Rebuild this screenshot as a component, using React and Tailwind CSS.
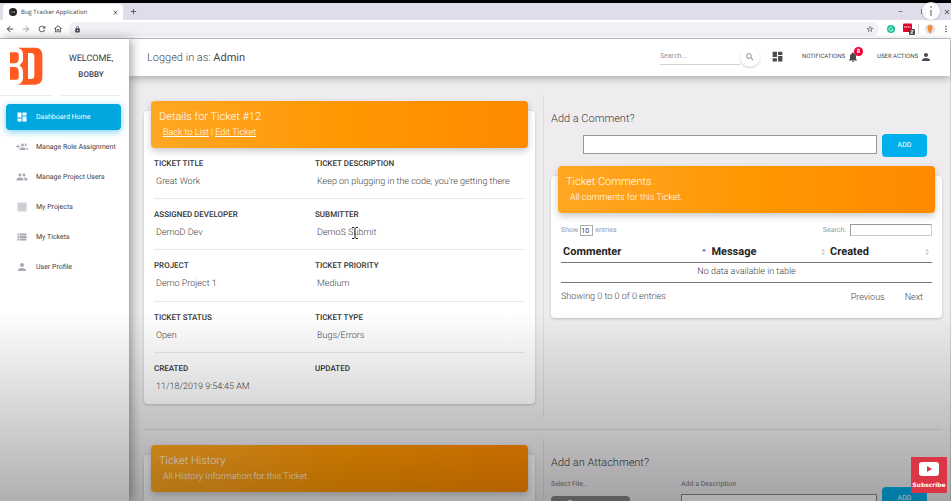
import React from "react";
import {
  MdDashboard, MdGroup, MdPerson, MdViewList, MdSearch, MdNotifications,
  MdArrowBack, MdArrowForward, MdRefresh, MdOutlineHome, MdLock, MdClose, MdAdd, MdStarBorder,
  MdMoreVert, MdRemove, MdCropSquare,
} from "react-icons/md";

function GroupAddIcon({ className }) {
  return (
    <svg viewBox="0 0 24 24" className={className} fill="currentColor" aria-hidden="true">
      <path d="M8 10H5V7H3v3H0v2h3v3h2v-3h3v-2zm10 1c1.66 0 2.99-1.34 2.99-3S19.66 5 18 5c-.32 0-.63.05-.91.14.57.81.9 1.79.9 2.86s-.34 2.04-.9 2.86c.28.09.59.14.91.14zm-5 0c1.66 0 2.99-1.34 2.99-3S14.66 5 13 5s-3 1.34-3 3 1.34 3 3 3zm6.620 2.160c.83.73 1.38 1.66 1.38 2.840v2h3v-2c0-1.54-2.37-2.49-4.38-2.84zM13 13c-2 0-6 1-6 3v2h12v-2c0-2-4-3-6-3z" />
    </svg>
  );
}

function ProjectsIcon({ className }) {
  return (
    <svg viewBox="0 0 24 24" className={className} aria-hidden="true">
      <path fill="#d3d1d9" d="M3 3h18v18H3z" />
      <path stroke="#c3c1cb" strokeWidth="1" d="M3 6h18M3 10h18M3 14h18M3 18h18" />
    </svg>
  );
}

const NAV = [
  { label: "Dashboard Home", Icon: MdDashboard, active: true },
  { label: "Manage Role Assignment", Icon: GroupAddIcon },
  { label: "Manage Project Users", Icon: MdGroup },
  { label: "My Projects", Icon: ProjectsIcon },
  { label: "My Tickets", Icon: MdViewList },
  { label: "User Profile", Icon: MdPerson },
];

const DETAILS = [
  ["Ticket Title", "Great Work", "Ticket Description", "Keep on plugging in the code, you're getting there"],
  ["Assigned Developer", "DemoD Dev", "Submitter", "DemoS Submit"],
  ["Project", "Demo Project 1", "Ticket Priority", "Medium"],
  ["Ticket Status", "Open", "Ticket Type", "Bugs/Errors"],
  ["Created", "11/18/2019 9:54:45 AM", "Updated", ""],
];

function BrowserChrome() {
  return (
    <div className="shrink-0 border-t-[3px] border-black font-['Open_Sans',sans-serif]">
      <div className="flex h-[17px] items-end bg-[#dfdde9] pl-[3px] text-[#3c4043]">
        <div className="flex h-4 w-[120px] items-center rounded-t bg-white pl-1.5 pr-1">
          <svg viewBox="0 0 16 16" className="size-2 shrink-0" aria-hidden="true">
            <circle cx="8" cy="8" r="8" fill="#222" />
            <path d="M4 6v4h2M8 10V6l3 4V6" stroke="#aaa" fill="none" />
          </svg>
          <span className="ml-1 flex-1 whitespace-nowrap text-[6px]">Bug Tracker Application</span>
          <button aria-label="Close tab"><MdClose className="size-[7px]" /></button>
        </div>
        <button aria-label="New tab" className="ml-1.5 self-center"><MdAdd className="size-[9px]" /></button>
        <div className="ml-auto flex items-center gap-4 self-center">
          <button aria-label="Minimize"><MdRemove className="size-[7px]" /></button>
          <button aria-label="Maximize"><MdCropSquare className="size-[7px]" /></button>
          <button aria-label="Close window"><MdClose className="size-2" /></button>
        </div>
      </div>
      <div className="flex h-[19px] items-center border-b border-[#c9c8ce] bg-white pl-[5px] text-[#4d4f54]">
        <div className="flex gap-1.5">
          <button aria-label="Back"><MdArrowBack className="size-2.5" /></button>
          <button aria-label="Forward"><MdArrowForward className="size-2.5 text-[#aaa]" /></button>
          <button aria-label="Reload"><MdRefresh className="size-2.5" /></button>
          <button aria-label="Home"><MdOutlineHome className="size-2.5" /></button>
        </div>
        <div className="ml-1.5 flex h-[14px] flex-1 items-center rounded-full bg-[#f1f0f6] px-[5px]">
          <MdLock className="size-[7px]" />
          <input aria-label="Address" className="min-w-0 flex-1 text-[6px] outline-none" />
          <MdStarBorder className="size-2" />
        </div>
        <div className="ml-2 flex items-center">
          <svg viewBox="0 0 16 16" className="size-2" aria-hidden="true">
            <circle cx="8" cy="8" r="8" fill="#15c39a" />
            <path d="M11 5.500A4 4 0 1 0 12 9H9" stroke="#fff" strokeWidth="1.500" fill="none" />
          </svg>
          <svg viewBox="0 0 24 24" className="ml-2 h-3 w-3" aria-hidden="true">
            <rect width="18" height="17" y="1" rx="2" fill="#e4002b" />
            <path d="M2 8h13" stroke="#fff" strokeWidth="2" strokeDasharray="3 1" />
            <rect x="12" y="12" width="12" height="12" rx="2" fill="#4a4a4a" />
            <path d="M16 15h4v3h-4v3h4" stroke="#fff" strokeWidth="1.500" fill="none" />
          </svg>
          <span className="ml-[3px] h-2.5 w-px bg-[#d5d4da]" />
          <svg viewBox="0 0 20 20" className="ml-1.5 size-2.5" aria-hidden="true">
            <circle cx="10" cy="10" r="10" fill="#e3e1e4" />
            <path d="M5 7a5 5 0 0 1 10 0c0 4-2 5-2 8l-3 4-3-4c0-3-2-4-2-8z" fill="#f58a33" />
          </svg>
          <button aria-label="Browser menu" className="ml-1.5"><MdMoreVert className="size-2.5" /></button>
        </div>
      </div>
    </div>
  );
}

function Sidebar() {
  return (
    <aside className="relative z-10 w-[129px] shrink-0 bg-white shadow-[2px_0_10px_rgba(0,0,0,0.4)]">
      <div className="flex h-[57px] gap-2 pr-2">
        <div className="w-[53px] border-b border-[#ececec] pl-[9px] pt-2">
          <svg viewBox="0 0 102 114" className="h-[38px] w-[34px]" role="img" aria-label="BD logo">
            <path fill="#ff5a1f" d="M3 16h20c4 0 6 3 6 7v14c0 7-5 12-12 12H3zM3 60h14c7 0 12 5 12 12v19c0 4-2 7-6 7H3z" />
            <path fill="#ff5a1f" fillRule="evenodd" d="M26 2h52c14 0 22 8 22 22v66c0 14-8 23-22 23H26c10-3 16-9 16-20V75c0-9-4-15-11-20 7-5 11-11 11-19V22C42 11 36 5 26 2zM57 18v78h9c7 0 10-4 10-10V28c0-6-3-10-10-10z" />
          </svg>
        </div>
        <div className="flex-1 border-b border-[#ececec] pt-3 text-center text-[#3c3c4c]">
          <div className="text-[9px] leading-4">WELCOME,</div>
          <div className="text-[8px] font-medium leading-4">BOBBY</div>
        </div>
      </div>
      <nav className="mt-2 flex flex-col gap-1 pl-1.5 pr-2 text-[7px] text-[#3c3c48]">
        {NAV.map(({ label, Icon, active }) => (
          <a
            key={label}
            href="#"
            className={
              active
                ? "flex h-[26px] items-center gap-2 whitespace-nowrap rounded-sm bg-[#00a8df] pl-2.5 text-white shadow-[0_2px_7px_rgba(0,168,223,0.5)]"
                : "flex h-[26px] items-center gap-2 whitespace-nowrap pl-2.5"
            }
          >
            <Icon className={active ? "size-3" : "size-3 text-[#aaa8b3]"} />
            {label}
          </a>
        ))}
      </nav>
    </aside>
  );
}

function Header() {
  return (
    <header className="relative flex h-[37px] shrink-0 items-center bg-white pl-[18px] pr-[18px] text-[7px] text-[#4a4a4f] shadow-[0_2px_8px_rgba(0,0,0,0.3)]">
      <h1 className="pt-0.5 text-[11px] font-light">
        Logged in as: <span className="font-normal">Admin</span>
      </h1>
      <div className="ml-auto flex items-center pb-0.5">
        <input aria-label="Search" placeholder="Search..." className="h-4 w-20 border-b border-[#d2d2d2] outline-none placeholder:text-[#999]" />
        <button aria-label="Search" className="flex size-5 items-center justify-center rounded-full bg-white shadow-[0_1px_2px_rgba(0,0,0,0.2)]">
          <MdSearch className="size-2.5 text-[#888]" />
        </button>
        <a href="#" aria-label="Dashboard" className="ml-[11px]"><MdDashboard className="size-[13px]" /></a>
        <a href="#" className="ml-[18px] flex items-center gap-0.5 text-[6px]">
          NOTIFICATIONS
          <span className="relative">
            <MdNotifications className="size-3" />
            <span className="absolute -right-1 -top-1 flex size-[9px] items-center justify-center rounded-full bg-[#f5002d] text-[6px] font-bold text-white">8</span>
          </span>
        </a>
        <a href="#" className="ml-[18px] flex items-center gap-0.5 text-[6px]">
          USER ACTIONS
          <MdPerson className="size-3" />
        </a>
      </div>
    </header>
  );
}

function Card({ title, subtitle, children }) {
  return (
    <section className="mt-2.5 rounded-sm bg-white px-[7px] shadow-[0_1px_3px_rgba(0,0,0,0.2)]">
      <div className="relative -top-2.5 -mb-2.5 h-[47px] rounded-sm bg-linear-to-r from-[#ffa722] via-[#ff9800] to-[#ff8a00] px-2 pt-2 text-white shadow-[0_3px_7px_rgba(0,0,0,0.22)]">
        <h2 className="text-[11px] font-light leading-4">{title}</h2>
        <p className="pl-1 text-[9px] font-light leading-4">{subtitle}</p>
      </div>
      {children}
    </section>
  );
}

function Field({ label, value }) {
  return (
    <div>
      <dt className="text-[8px] font-medium uppercase leading-4 text-[#333]">{label}</dt>
      <dd className="pl-0.5 pt-0.5 text-[9px] font-light leading-4 text-[#444]">{value}</dd>
    </div>
  );
}

function Sorter({ ascending }) {
  return (
    <svg viewBox="0 0 8 12" className="h-2 w-1.5" aria-hidden="true">
      <path d="M1 5l3-4 3 4z" fill={ascending ? "#6d4fd0" : "#ccc"} />
      {!ascending && <path d="M1 7l3 4 3-4z" fill="#ccc" />}
    </svg>
  );
}

function CommentsTable() {
  return (
    <div className="px-[3px] pb-[13px] text-[#444]">
      <div className="flex items-center justify-between pt-[11px] text-[7px] text-[#999]">
        <label className="flex items-center gap-0.5">
          Show
          <select defaultValue="10" className="h-[11px] w-[13px] appearance-none border border-[#aaa] text-[7px] text-[#333]">
            <option>10</option>
            <option>25</option>
          </select>
          entries
        </label>
        <label className="flex items-center gap-1">
          Search:
          <input className="h-3 w-[82px] border border-[#ccc] border-l-[#999] border-t-[#999] bg-white" />
        </label>
      </div>
      <table className="mt-2 w-full border-b border-[#777] text-left text-[9px]">
        <thead>
          <tr className="border-b border-[#777] text-[11px] leading-4 text-[#222]">
            {["Commenter", "Message", "Created"].map((name, i) => (
              <th key={name} className={["w-2/5 pb-0.5 pl-0.5", "w-8/25 pb-0.5 pl-0.5", "pb-0.5 pl-0.5"][i]}>
                <span className="flex items-center justify-between pr-0.5">
                  {name}
                  <Sorter ascending={i === 0} />
                </span>
              </th>
            ))}
          </tr>
        </thead>
        <tbody>
          <tr>
            <td colSpan={3} className="h-5 text-center font-light">No data available in table</td>
          </tr>
        </tbody>
      </table>
      <div className="flex items-center justify-between pt-1.5 text-[9px] font-light leading-4">
        <span>Showing 0 to 0 of 0 entries</span>
        <span className="flex gap-5 pr-[9px]">
          <button>Previous</button>
          <button>Next</button>
        </span>
      </div>
    </div>
  );
}

function AddButton() {
  return (
    <button className="h-[23px] w-[45px] rounded-sm bg-[#00b0ec] text-[7px] text-white">ADD</button>
  );
}

export default function App() {
  return (
    <div className="relative flex h-screen flex-col overflow-hidden bg-[#eeecef] font-[Roboto,'Liberation_Sans',sans-serif] text-[#3c3c3c] [text-rendering:geometricPrecision]">
      <BrowserChrome />
      <div className="flex min-h-0 flex-1">
        <Sidebar />
        <div className="flex min-w-0 flex-1 flex-col border-r border-[#d0cfd4]">
          <Header />
          <main className="min-h-0 flex-1 overflow-hidden pl-[15px] pr-2 pt-[19px]">
            <div className="grid grid-cols-2">
              <div className="pr-2 pt-1.5">
                <Card
                  title="Details for Ticket #12"
                  subtitle={<><a href="#" className="underline">Back to List</a> | <a href="#" className="underline">Edit Ticket</a></>}
                >
                  <dl className="grid h-64 grid-rows-5 px-[3px]">
                    {DETAILS.map(([a, av, b, bv]) => (
                      <div key={a} className="grid grid-cols-[161px_1fr] border-b border-[#e8e8e8] pt-2 last:border-b-0">
                        <Field label={a} value={av} />
                        <Field label={b} value={bv} />
                      </div>
                    ))}
                  </dl>
                </Card>
              </div>
              <div className="border-l border-[#dddbe0] pb-[99px] pl-[7px] pt-4">
                <h2 className="text-[11px] font-light leading-4">Add a Comment?</h2>
                <div className="mb-2 mt-[7px] flex gap-[5px] pl-8 pr-[15px]">
                  <input aria-label="Comment" className="mt-px h-[19px] min-w-0 flex-1 border border-[#999] bg-white" />
                  <AddButton />
                </div>
                <div className="pt-px">
                  <Card title="Ticket Comments" subtitle="All comments for this Ticket.">
                    <CommentsTable />
                  </Card>
                </div>
              </div>
            </div>
            <hr className="mb-[9px] mt-3 border-[#d8d6da]" />
            <div className="grid grid-cols-2">
              <div className="pr-2 pt-1.5">
                <Card title="Ticket History" subtitle="All History Information for this Ticket.">
                  <div className="h-16" />
                </Card>
              </div>
              <div className="border-l border-[#dddbe0] pl-[7px] pt-4">
                <h2 className="text-[11px] font-light leading-4">Add an Attachment?</h2>
                <div className="mt-2 flex gap-[5px] pr-[15px] text-[7px] text-[#777]">
                  <label className="w-[125px]">
                    Select File...
                    <span className="mt-1.5 flex h-5 w-[79px] rounded-sm bg-[#858585] pl-4 pt-1">
                      <span className="size-1.5 rounded-full bg-white" />
                    </span>
                    <input type="file" className="sr-only" />
                  </label>
                  <label className="min-w-0 flex-1">
                    Add a Description
                    <input className="mt-1 h-[19px] w-full border border-[#888] bg-white" />
                  </label>
                  <div className="pt-2"><AddButton /></div>
                </div>
              </div>
            </div>
          </main>
        </div>
      </div>
      <div className="pointer-events-none absolute inset-x-0 bottom-0 z-20 h-[190px] bg-linear-to-t from-black/31 to-transparent" />
      <svg viewBox="0 0 8 12" className="absolute left-[351px] top-[227px] z-20 h-3 w-2" aria-hidden="true">
        <path d="M1 .5h2l1 1 1-1h2M4 1.500v9M1 11.500h2l1-1 1 1h2" stroke="#222" fill="none" />
      </svg>
      <button aria-label="Info" className="absolute right-[11px] top-[2px] z-30 flex size-[18px] items-center justify-center rounded-full bg-white/90 shadow-[0_0_2px_rgba(0,0,0,0.4)]">
        <svg viewBox="0 0 18 18" className="size-[18px]" aria-hidden="true">
          <path d="M9 4v2M9 8v6" stroke="#aaa" strokeWidth="2" />
        </svg>
      </button>
      <button className="absolute bottom-2 right-1 z-30 flex h-9 w-9 flex-col items-center gap-1 bg-[#dc3545] pt-[5px] font-['DejaVu_Sans',sans-serif] text-[6px] font-bold text-white">
        <svg viewBox="0 0 20 14" className="h-[14px] w-5" aria-hidden="true">
          <rect width="20" height="14" rx="3" fill="#fff" />
          <path d="M8 4l5 3-5 3z" fill="#dc3545" />
        </svg>
        Subscribe
      </button>
    </div>
  );
}
